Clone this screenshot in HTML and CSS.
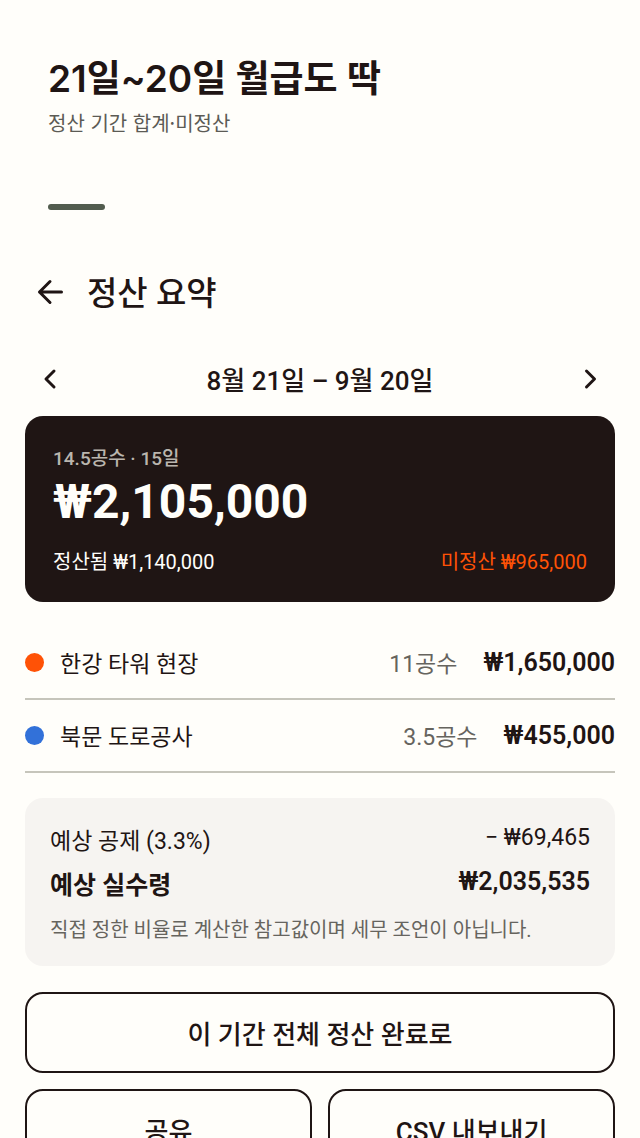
FILE: index.html
```html
<!DOCTYPE html>
<html lang="ko">
<head>
  <meta charset="UTF-8" />
  <meta name="viewport" content="width=device-width, initial-scale=1.0" />
  <title>정산 요약</title>
  <link rel="stylesheet" href="styles.css">
</head>
<body>
  <header class="intro">
    <h1>21일~20일 월급도 딱</h1>
    <p>정산 기간 합계·미정산</p>
    <div class="bar"></div>
  </header>

  <main>
    <div class="topbar">
      <button class="icon-btn" aria-label="뒤로">
        <svg width="30" height="30" viewBox="0 0 30 30"><path d="M26.500 15H4.500M15 4.500L4.500 15L15 25.500" /></svg>
      </button>
      <h2>정산 요약</h2>
    </div>

    <div class="period">
      <button class="icon-btn" aria-label="이전 기간">
        <svg width="30" height="30" viewBox="0 0 30 30"><path d="M19 7l-8 8l8 8" /></svg>
      </button>
      <span>8월 21일 – 9월 20일</span>
      <button class="icon-btn" aria-label="다음 기간">
        <svg width="30" height="30" viewBox="0 0 30 30"><path d="M11.500 7l8 8l-8 8" /></svg>
      </button>
    </div>

    <section class="total">
      <div class="total-days">14.5공수 · 15일</div>
      <div class="total-amount">₩2,105,000</div>
      <div class="total-split">
        <span>정산됨 ₩1,140,000</span>
        <span class="unpaid">미정산 ₩965,000</span>
      </div>
    </section>

    <ul class="sites">
      <li>
        <span class="dot orange"></span>
        <span class="name">한강 타워 현장</span>
        <span class="days">11공수</span>
        <span class="amount">₩1,650,000</span>
      </li>
      <li>
        <span class="dot blue"></span>
        <span class="name">북문 도로공사</span>
        <span class="days">3.5공수</span>
        <span class="amount">₩455,000</span>
      </li>
    </ul>

    <section class="estimate">
      <div class="line">
        <span>예상 공제 (3.3%)</span>
        <span class="value">− ₩69,465</span>
      </div>
      <div class="line net">
        <span>예상 실수령</span>
        <span class="value">₩2,035,535</span>
      </div>
      <p>직접 정한 비율로 계산한 참고값이며 세무 조언이 아닙니다.</p>
    </section>

    <div class="actions">
      <button class="wide">이 기간 전체 정산 완료로</button>
      <button>공유</button>
      <button>CSV 내보내기</button>
    </div>
  </main>
</body>
</html>
```
FILE: styles.css
```css
* {
  box-sizing: border-box;
}

body {
  margin: 0;
  font-family: Roboto, "Noto Sans CJK KR", sans-serif;
  background-color: #fffefa;
  color: #1f1514;
}

h1, h2, p, ul {
  margin: 0;
  padding: 0;
}

button {
  font-family: inherit;
  color: inherit;
  background: none;
  cursor: pointer;
}

.intro {
  padding: 51px 48px 0;
  font-family: "Noto Sans CJK KR", sans-serif;
}

.intro h1 {
  font-family: Inter, "Noto Sans CJK KR", sans-serif;
  font-size: 37px;
  line-height: 56px;
  font-weight: 600;
}

.intro p {
  margin-top: 2px;
  font-size: 20px;
  line-height: 28px;
  color: #5c5b55;
}

.bar {
  width: 57px;
  height: 6px;
  margin-top: 67px;
  border-radius: 3px;
  background-color: #525c4e;
}

main {
  padding: 57px 25px 32px;
}

.icon-btn {
  display: flex;
  align-items: center;
  justify-content: center;
  width: 50px;
  height: 50px;
  padding: 0;
  border: none;
}

.icon-btn svg {
  fill: none;
  stroke: #1f1514;
  stroke-width: 3;
  stroke-linecap: round;
  stroke-linejoin: round;
}

.topbar {
  display: flex;
  align-items: flex-start;
  gap: 12px;
  height: 50px;
}

.topbar h2 {
  font-size: 33px;
  line-height: 54px;
  font-weight: 500;
}

.period {
  display: flex;
  align-items: flex-start;
  justify-content: space-between;
  height: 50px;
  margin-top: 37px;
  font-size: 26px;
  line-height: 54px;
  font-weight: 500;
}

.total {
  margin-top: 12px;
  padding: 29px 28px 26px;
  border-radius: 18px;
  background-color: #1f1514;
  color: #fffefa;
}

.total-days {
  font-size: 19px;
  line-height: 28px;
  font-weight: 500;
  color: #bab5ae;
}

.total-amount {
  font-size: 48px;
  line-height: 58px;
  font-weight: 700;
}

.total-split {
  display: flex;
  justify-content: space-between;
  margin-top: 17px;
  font-size: 20px;
  line-height: 28px;
}

.unpaid {
  color: #ff5206;
}

.sites {
  margin-top: 25px;
  list-style: none;
}

.sites li {
  display: flex;
  align-items: center;
  height: 73px;
  border-bottom: 2px solid #c6c5bb;
  font-size: 23px;
  line-height: 36px;
}

.dot {
  width: 19px;
  height: 19px;
  margin-right: 16px;
  border-radius: 50%;
}

.orange {
  background-color: #ff5206;
}

.blue {
  background-color: #3271d9;
}

.name {
  flex: 1;
}

.name, .days {
  padding-top: 4px;
}

.days {
  margin-right: 26px;
  color: #66645e;
}

.amount {
  font-size: 25px;
  font-weight: 600;
}

.estimate {
  margin-top: 25px;
  padding: 22px 25px 22px;
  border-radius: 18px;
  background-color: #f6f4f1;
}

.line {
  display: flex;
  justify-content: space-between;
  font-size: 23px;
  line-height: 44px;
}

.line .value {
  line-height: 36px;
}

.net {
  font-size: 25px;
  font-weight: 600;
}

.estimate p {
  margin-top: 8px;
  font-size: 20px;
  line-height: 28px;
  color: #66645e;
}

.actions {
  display: grid;
  grid-template-columns: 1fr 1fr;
  gap: 16px;
  margin-top: 26px;
}

.actions button {
  height: 81px;
  padding: 0;
  border: 2px solid #1f1514;
  border-radius: 18px;
  font-size: 26px;
  font-weight: 500;
}

.actions .wide {
  grid-column: 1 / 3;
}
```
